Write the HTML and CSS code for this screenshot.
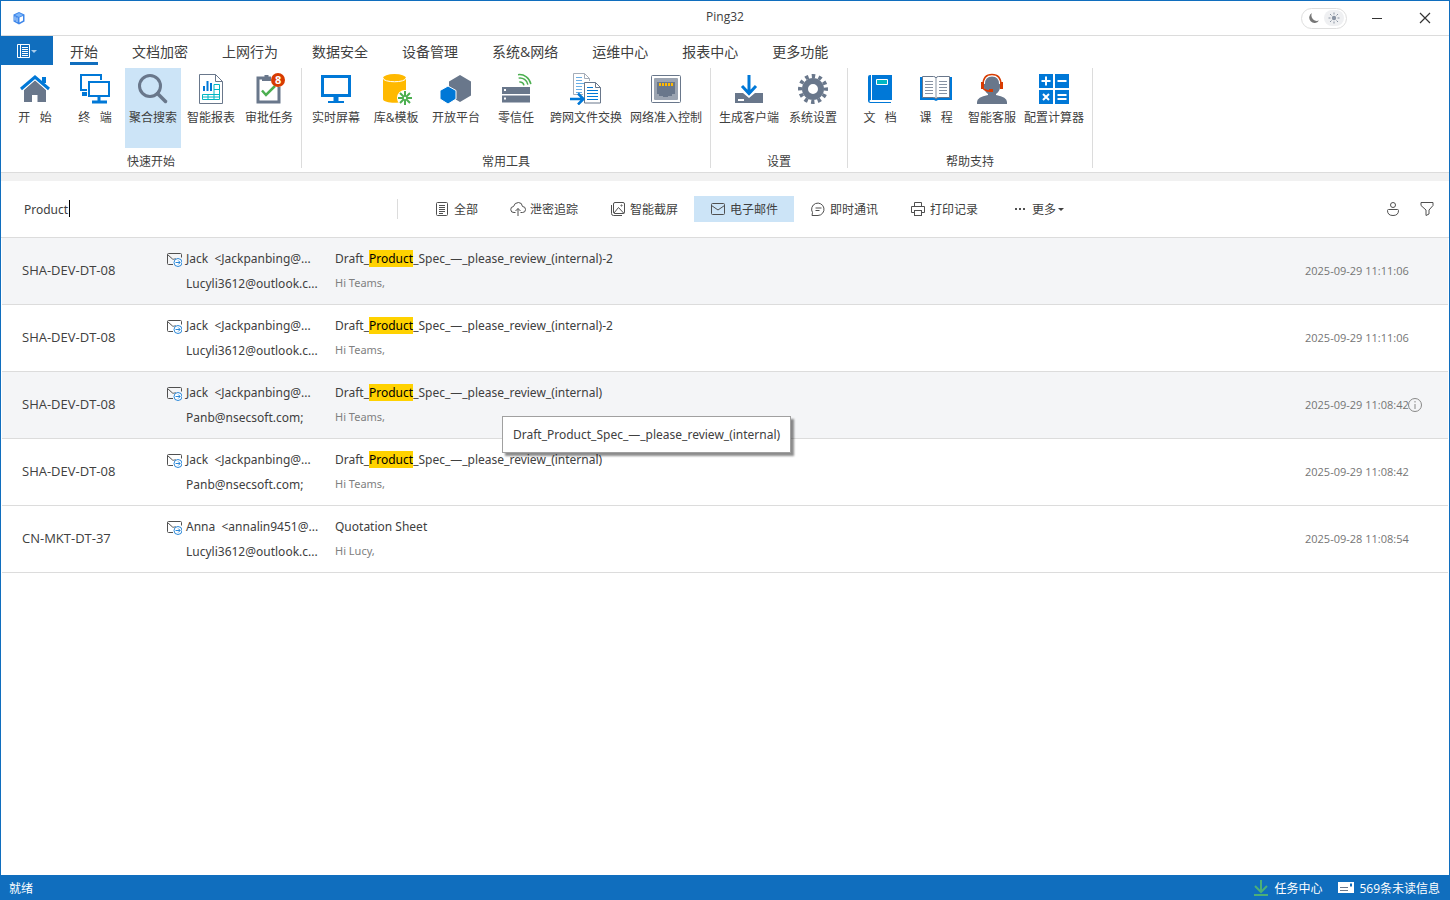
FILE: index.html
```html
<!DOCTYPE html>
<html lang="zh-CN">
<head>
    <meta charset="UTF-8">
    <meta name="viewport" content="width=device-width, initial-scale=1.0">
    <title>Ping32</title>
    <link rel="stylesheet" href="styles.css">
</head>
<body>
    <!-- 共用图标 -->
    <svg class="sprite" aria-hidden="true">
        <symbol id="mail-out" viewBox="0 0 16 16">
            <path d="M7 13.500H2.500A1 1 0 0 1 1.500 12.500V3.500A1 1 0 0 1 2.500 2.500H14.500A1 1 0 0 1 15.500 3.500V6.500M1.500 3.500L6.500 8Q7.500 8.500 8.500 8L9.500 7.500" fill="none" stroke="#505050"/>
            <circle cx="12" cy="11.500" r="4" fill="#fff" stroke="#2b88d8"/>
            <path d="M9.500 11.500h4.500M12.200 9.500l2 2-2 2" fill="none" stroke="#2b88d8"/>
        </symbol>
    </svg>

    <div class="window">
        <header class="titlebar">
            <svg class="logo" viewBox="0 0 14 14">
                <path d="M7 1l5.500 2.500v7L7 13.500 1.500 10.500v-7z" fill="#3f87ea"/>
                <path d="M3 4l4-2 4 2-4 2z" fill="#7db6fa"/>
                <path d="M7.500 6.500l3.500-1.500v4.500l-3.500 2z" fill="#fff"/>
                <path d="M3 5.500v4M5 6.500v4.500" stroke="#c5dffc"/>
            </svg>
            <h1>Ping32</h1>
            <div class="window-controls">
                <button class="theme-switch" aria-label="切换主题">
                    <svg viewBox="0 0 16 16"><path d="M6 3a5.500 5.500 0 0 0 7 7.500A5.300 5.300 0 1 1 6 3z" fill="#777"/></svg>
                    <span class="theme-knob">
                        <svg viewBox="0 0 16 16"><circle cx="8" cy="8" r="2.200" fill="#8a94a3"/><path d="M8 2.500v2M8 11.500v2M2.500 8h2M11.500 8h2M4 4l1.500 1.500M10.500 10.500L12 12M4 12l1.500-1.500M10.500 5.500L12 4" stroke="#8a94a3"/></svg>
                    </span>
                </button>
                <button class="control" aria-label="最小化"><svg viewBox="0 0 12 12"><path d="M1 6.500h10" stroke="#333"/></svg></button>
                <button class="control" aria-label="关闭"><svg viewBox="0 0 12 12"><path d="M1 1l10 10M11 1L1 11" stroke="#333" stroke-width="1.200"/></svg></button>
            </div>
        </header>

        <nav class="tabs">
            <button class="file-menu" aria-label="菜单">
                <svg viewBox="0 0 20 14">
                    <path d="M.5.5h12v13H.5zM3.500.500v13M5 3.500h6M5 5.500h6M5 7.500h6M5 9.500h6M5 11.500h6" fill="none" stroke="#fff"/>
                    <path d="M14 6h6l-3 3z" fill="#a9cdec"/>
                </svg>
            </button>
            <a href="#" class="tab active"><span>开始</span></a>
            <a href="#" class="tab"><span>文档加密</span></a>
            <a href="#" class="tab"><span>上网行为</span></a>
            <a href="#" class="tab"><span>数据安全</span></a>
            <a href="#" class="tab"><span>设备管理</span></a>
            <a href="#" class="tab"><span>系统&amp;网络</span></a>
            <a href="#" class="tab"><span>运维中心</span></a>
            <a href="#" class="tab"><span>报表中心</span></a>
            <a href="#" class="tab"><span>更多功能</span></a>
        </nav>

        <div class="ribbon">
            <section class="group quick">
                <div class="tools">
                    <button class="tool short">
                        <svg viewBox="0 0 32 32"><path d="M23 4h4v8h-4z" fill="#0078d7"/><path d="M16 7L5 17v12h8v-7h5.500v7H27V17z" fill="#69778b"/><path d="M2 16L16 4l14 12" fill="none" stroke="#fff" stroke-width="5"/><path d="M2 16L16 4l14 12" fill="none" stroke="#0078d7" stroke-width="3"/><path d="M23 4h4v6h-4z" fill="#0078d7"/></svg>
                        <span>开&nbsp;&nbsp; 始</span>
                    </button>
                    <button class="tool short">
                        <svg viewBox="0 0 32 32" fill="none" stroke="#0078d7" stroke-width="2"><path d="M22 7V2H2v15h6M8 20H4v2h4"/><rect x="10" y="9" width="20" height="14"/><path d="M20 23v6M13 29h15" stroke-width="3"/></svg>
                        <span>终&nbsp;&nbsp; 端</span>
                    </button>
                    <button class="tool selected">
                        <svg viewBox="0 0 32 32" fill="none" stroke="#69778b" stroke-width="3"><circle cx="13" cy="13" r="10.500"/><path d="M20.500 20.500l8 8" stroke-width="3.500" stroke-linecap="round"/></svg>
                        <span>聚合搜索</span>
                    </button>
                    <button class="tool">
                        <svg viewBox="0 0 32 32" fill="none"><path d="M4.500 1.500h16l7 7v22h-23zM20.500 1.500v7h7" stroke="#69778b"/><path d="M9 13v5M12.500 8v10M16 10v8" stroke="#0078d7" stroke-width="2"/><path d="M19 11.500h5.500v15h-17v-5h17M19 16.500h5.500M7.500 24h17M13 21.500v5M19 11.500v15" stroke="#00b7c3"/></svg>
                        <span>智能报表</span>
                    </button>
                    <button class="tool">
                        <svg viewBox="0 0 32 32" fill="none"><path d="M9 5H5v24h21V14" stroke="#69778b" stroke-width="3"/><path d="M9 3.500h2.500V2h4v1.500H18V8H9z" fill="#69778b"/><path d="M9 17.500l4 4.500 9-9" stroke="#4caf50" stroke-width="2.500"/></svg>
                        <i class="badge">8</i>
                        <span>审批任务</span>
                    </button>
                </div>
                <h2>快速开始</h2>
            </section>
            <section class="group common">
                <div class="tools">
                    <button class="tool">
                        <svg viewBox="0 0 32 32" fill="none" stroke="#0078d7"><rect x="2.500" y="3.500" width="27" height="19" stroke-width="3"/><path d="M16 23v6" stroke-width="5"/><path d="M8 29h16" stroke-width="2"/></svg>
                        <span>实时屏幕</span>
                    </button>
                    <button class="tool">
                        <svg viewBox="0 0 32 32"><path d="M3 5v21c0 5 23 5 23 0V5z" fill="#ffb900"/><ellipse cx="14.500" cy="5" rx="11.500" ry="4" fill="#ffb900"/><path d="M3 5c0 5 23 5 23 0" fill="none" stroke="#fff"/><circle cx="25" cy="25" r="8" fill="#fff"/><path d="M25 18v14M18 25h14M20 20l10 10M20 30l10-10" stroke="#4caf50" stroke-width="2"/><circle cx="25" cy="25" r="1.200" fill="#fff"/></svg>
                        <span>库&amp;模板</span>
                    </button>
                    <button class="tool">
                        <svg viewBox="0 0 32 32"><path d="M20 2l11 6.500v14L20 29 9 22.500v-14z" fill="#69778b"/><path d="M8 13l8 4.500v8.500l-8 5-8-5v-8.500z" fill="#0078d7" stroke="#fff"/></svg>
                        <span>开放平台</span>
                    </button>
                    <button class="tool">
                        <svg viewBox="0 0 32 32"><path d="M2 14h28v7H2zM2 22.500h28v7H2z" fill="#69778b"/><path d="M4 16h2v2H4zM4 24.500h2v2H4z" fill="#fff"/><path d="M20 9a4 4 0 0 1 4 4M20 5a8 8 0 0 1 8 8M20 1.500A11.500 11.500 0 0 1 31 13" transform="rotate(-10 20 13)" fill="none" stroke="#4caf50" stroke-width="1.500"/></svg>
                        <span>零信任</span>
                    </button>
                    <button class="tool">
                        <svg viewBox="0 0 32 32" fill="none"><path d="M13 21.500H3.500v-21h11l5 5V8M14.500.500v5h5" stroke="#a5adb8"/><path d="M6 4.500h6M6 7.500h6M6 10.500h8M6 13.500h6M6 16.500h6M6 19.500h6" stroke="#69aee6"/><path d="M14.500 9.500h11l5 5v15.500h-16zM25.500 9.500v5h5" fill="#fff" stroke="#69778b"/><path d="M17 14.500h6M17 17.500h11M17 20.500h11M17 23.500h11M17 26.500h11" stroke="#0078d7"/><path d="M0 26h13M8 20.500l5.500 5.500L8 31.500" stroke="#0078d7" stroke-width="2.500"/></svg>
                        <span>跨网文件交换</span>
                    </button>
                    <button class="tool">
                        <svg viewBox="0 0 32 32"><rect x="1.500" y="2.500" width="29" height="27" rx="1" fill="#fff" stroke="#69778b"/><rect x="4" y="5" width="24" height="22" rx="1" fill="#9ba4b1"/><path d="M7 9h18v12h-3v2h-4v1h-5v-1H9v-2H7z" fill="#69778b"/><path d="M9 11.500h14" stroke="#ffb900" stroke-width="3" stroke-dasharray="2 1"/></svg>
                        <span>网络准入控制</span>
                    </button>
                </div>
                <h2>常用工具</h2>
            </section>
            <section class="group setup">
                <div class="tools">
                    <button class="tool">
                        <svg viewBox="0 0 32 32"><path d="M2 20h8l6 5 6-5h8v10H2z" fill="#69778b"/><path d="M5 26h6v2H5z" fill="#fff"/><path d="M16 2v18M9 13l7 7.500 7-7.500" fill="none" stroke="#0078d7" stroke-width="3"/></svg>
                        <span>生成客户端</span>
                    </button>
                    <button class="tool">
                        <svg viewBox="0 0 32 32" fill="none" stroke="#69778b"><circle cx="16" cy="16" r="8" stroke-width="6"/><circle cx="16" cy="16" r="13" stroke-width="4" stroke-dasharray="3.403 3.403" transform="rotate(-7 16 16)"/></svg>
                        <span>系统设置</span>
                    </button>
                </div>
                <h2>设置</h2>
            </section>
            <section class="group">
                <div class="tools">
                    <button class="tool">
                        <svg viewBox="0 0 32 32"><path d="M6 2h22v25H6.500a1 1 0 0 0 0 2H27v1H6q-2-.5-2-2V4q0-2 2-2z" fill="#0078d7"/><path d="M7.500 2v25" stroke="#fff"/><path d="M12.500 6.500h11v5h-11z" fill="#00b7c3" stroke="#fff"/></svg>
                        <span>文&nbsp;&nbsp; 档</span>
                    </button>
                    <button class="tool">
                        <svg viewBox="0 0 32 32"><path d="M0 4h32v23H18l-2 1-2-1H0z" fill="#0078d7"/><path d="M2.500 3.500h11q2 0 2.500 1.500.5-1.500 2.500-1.500h11v21h-11q-2 0-2.500 1.500-.5-1.500-2.500-1.500h-11z" fill="#fff" stroke="#69778b"/><path d="M16 5v20M5 8.500h8M5 11.500h8M5 14.500h8M5 17.500h8M5 20.500h8M19 8.500h8M19 11.500h8M19 14.500h8M19 17.500h8M19 20.500h8" stroke="#8792a2"/></svg>
                        <span>课&nbsp;&nbsp; 程</span>
                    </button>
                    <button class="tool">
                        <svg viewBox="0 0 32 32"><path d="M8 9q0-7 8-7t8 7v5q0 4-4 7v1q11 2 11 7v2H1v-2q0-5 11-7v-1q-4-3-4-7z" fill="#69778b"/><path d="M7 11Q7 1.500 16 1.500T25 11" fill="none" stroke="#fff" stroke-width="4"/><path d="M7 12Q7 1.500 16 1.500T25 12M7 15q2 3 7 3" fill="none" stroke="#d83b01" stroke-width="1.500"/><path d="M5 9h3v7H5zM24 9h3v7h-3zM13 16h4v3h-4z" fill="#d83b01"/></svg>
                        <span>智能客服</span>
                    </button>
                    <button class="tool">
                        <svg viewBox="0 0 32 32"><path d="M1 1h14v14H1zM17 1h14v14H17zM1 17h14v14H1zM17 17h14v14H17z" fill="#0078d7"/><path d="M3.500 8h9M8 3.500v9M19.500 8h9M5 21l6 6M11 21l-6 6M19.500 22h9M19.500 26h9" stroke="#fff" stroke-width="2"/></svg>
                        <span>配置计算器</span>
                    </button>
                </div>
                <h2>帮助支持</h2>
            </section>
        </div>

        <div class="searchbar">
            <div class="search-field">
                <input type="text" value="Product" aria-label="搜索">
                <span class="caret"></span>
            </div>
            <div class="filters">
                <button class="filter"><svg viewBox="0 0 16 16"><rect x="2.500" y="1.500" width="11" height="13" rx="1"/><path d="M5 4.500h6M5 6.500h6M5 8.500h6M5 10.500h6M5 12.500h4"/></svg>全部</button>
                <button class="filter"><svg viewBox="0 0 16 16"><path d="M5.500 11.500H4a3 3 0 0 1-.5-6q1-4 5-4 3.500 0 4 4a3 3 0 0 1 0 6h-2M8 15V7.500M5.500 10L8 7.500l2.500 2.500"/></svg>泄密追踪</button>
                <button class="filter"><svg viewBox="0 0 16 16"><rect x="3.500" y="1.500" width="11" height="11" rx="1.500"/><path d="M1.500 4v8.500q0 2 2 2H12M4 12l4.500-5.500 5.500 6"/><circle cx="11.500" cy="4.500" r=".6"/></svg>智能截屏</button>
                <button class="filter current"><svg viewBox="0 0 16 16"><rect x="1.500" y="2.500" width="13" height="11" rx="1"/><path d="M1.500 4.500L8 9l6.500-4.500"/></svg>电子邮件</button>
                <button class="filter"><svg viewBox="0 0 16 16"><path d="M2 14.500h6A6.200 6.200 0 1 0 2.500 11.500zM5.500 7h6M5.500 9.500h4"/></svg>即时通讯</button>
                <button class="filter"><svg viewBox="0 0 16 16"><path d="M4.500 5.500v-4h7v4M4 11.500H1.500v-6h13v6H12"/><rect x="4.500" y="9.500" width="7" height="5"/></svg>打印记录</button>
                <button class="filter more"><svg viewBox="0 0 16 16"><path d="M3 8h2M7 8h2M11 8h2" stroke-width="2"/></svg>更多<i class="arrow"></i></button>
            </div>
            <div class="search-actions">
                <button aria-label="用户"><svg viewBox="0 0 16 16"><circle cx="8" cy="4" r="2.500"/><path d="M3.500 8.500h9q1 0 1 1 0 5-5.500 5t-5.500-5q0-1 1-1z"/></svg></button>
                <button aria-label="筛选"><svg viewBox="0 0 16 16"><path d="M2 1.500h12v3L10 9v4l-3 1.500V9L2 4.500z"/></svg></button>
            </div>
        </div>

        <main>
            <table class="results">
                <colgroup>
                    <col class="col-device">
                    <col class="col-people">
                    <col>
                    <col class="col-time">
                </colgroup>
                <tbody>
                    <tr class="shaded">
                        <td class="device">SHA-DEV-DT-08</td>
                        <td class="people"><svg><use href="#mail-out"/></svg><p>Jack &nbsp;&lt;Jackpanbing@...</p><p>Lucyli3612@outlook.c...</p></td>
                        <td class="subject"><p>Draft_<mark>Product</mark>_Spec_—_please_review_(internal)-2</p><p class="preview">Hi Teams,</p></td>
                        <td class="time">2025-09-29 11:11:06</td>
                    </tr>
                    <tr>
                        <td class="device">SHA-DEV-DT-08</td>
                        <td class="people"><svg><use href="#mail-out"/></svg><p>Jack &nbsp;&lt;Jackpanbing@...</p><p>Lucyli3612@outlook.c...</p></td>
                        <td class="subject"><p>Draft_<mark>Product</mark>_Spec_—_please_review_(internal)-2</p><p class="preview">Hi Teams,</p></td>
                        <td class="time">2025-09-29 11:11:06</td>
                    </tr>
                    <tr class="shaded">
                        <td class="device">SHA-DEV-DT-08</td>
                        <td class="people"><svg><use href="#mail-out"/></svg><p>Jack &nbsp;&lt;Jackpanbing@...</p><p>Panb@nsecsoft.com;</p></td>
                        <td class="subject">
                            <p>Draft_<mark>Product</mark>_Spec_—_please_review_(internal)</p><p class="preview">Hi Teams,</p>
                            <div class="tooltip" role="tooltip">Draft_Product_Spec_—_please_review_(internal)</div>
                        </td>
                        <td class="time">2025-09-29 11:08:42<button class="info" aria-label="详情"><svg viewBox="0 0 16 16"><circle cx="8" cy="8" r="6.500"/><path d="M8 7v5M8 4v1.500"/></svg></button></td>
                    </tr>
                    <tr>
                        <td class="device">SHA-DEV-DT-08</td>
                        <td class="people"><svg><use href="#mail-out"/></svg><p>Jack &nbsp;&lt;Jackpanbing@...</p><p>Panb@nsecsoft.com;</p></td>
                        <td class="subject"><p>Draft_<mark>Product</mark>_Spec_—_please_review_(internal)</p><p class="preview">Hi Teams,</p></td>
                        <td class="time">2025-09-29 11:08:42</td>
                    </tr>
                    <tr>
                        <td class="device">CN-MKT-DT-37</td>
                        <td class="people"><svg><use href="#mail-out"/></svg><p>Anna &nbsp;&lt;annalin9451@...</p><p>Lucyli3612@outlook.c...</p></td>
                        <td class="subject"><p>Quotation Sheet</p><p class="preview">Hi Lucy,</p></td>
                        <td class="time">2025-09-28 11:08:54</td>
                    </tr>
                </tbody>
            </table>
        </main>

        <footer class="statusbar">
            <span>就绪</span>
            <div class="status-links">
                <a href="#"><svg viewBox="0 0 16 16"><path d="M8 0v12M2 6l6 6 6-6M1 15h14" fill="none" stroke="#4caf78" stroke-width="2"/></svg>任务中心</a>
                <a href="#"><svg viewBox="0 0 16 16"><path d="M0 2h16v11H0z" fill="#fff"/><path d="M12 3.500h2v3h-2z" fill="#106ebe"/><path d="M2 7.500h8M2 10.500h8" stroke="#69778b"/></svg>569条未读信息</a>
            </div>
        </footer>
    </div>
</body>
</html>
```
FILE: styles.css
```css
* {
    margin: 0;
    padding: 0;
    box-sizing: border-box;
}

body {
    font-family: "Open Sans", "Noto Sans CJK SC", sans-serif;
    font-size: 12px;
    color: #404040;
    background: #fff;
}

button,
input {
    font: inherit;
    color: inherit;
    border: none;
    background: none;
}

a {
    color: inherit;
    text-decoration: none;
}

.sprite {
    display: none;
}

.window {
    display: flex;
    flex-direction: column;
    min-height: 100vh;
    border: 1px solid #106ebe;
    border-bottom: none;
}

/* 标题栏 */
.titlebar {
    display: grid;
    grid-template-columns: 1fr auto 1fr;
    align-items: center;
    height: 35px;
    border-bottom: 1px solid #dcdcdc;
}

.logo {
    width: 14px;
    height: 14px;
    margin-left: 11px;
}

h1 {
    font-size: 12px;
    font-weight: normal;
    line-height: 16px;
    padding-bottom: 2px;
}

.window-controls {
    display: flex;
    justify-content: flex-end;
    align-items: center;
}

.theme-switch {
    display: flex;
    align-items: center;
    gap: 2px;
    width: 46px;
    height: 21px;
    margin-right: 6px;
    padding: 0 2px 0 4px;
    border: 1px solid #dedede;
    border-radius: 11px;
}

.theme-switch svg {
    display: block;
    width: 16px;
    height: 16px;
}

.theme-knob {
    display: flex;
    justify-content: center;
    width: 20px;
    border-radius: 8px;
    background: #eff0f2;
}

.control {
    width: 48px;
    height: 34px;
}

.control svg {
    display: block;
    width: 12px;
    height: 12px;
    margin: 0 auto;
}

/* 菜单标签 */
.tabs {
    display: flex;
    height: 32px;
}

.file-menu {
    width: 52px;
    height: 29px;
    background: #106ebe;
}

.file-menu svg {
    display: block;
    width: 20px;
    height: 14px;
    margin: 0 auto;
}

.tab {
    height: 29px;
    padding: 0 17px;
    font-size: 14px;
    line-height: 32px;
}

.tab span {
    display: block;
    height: 29px;
}

.tab.active span {
    border-bottom: 3px solid #106ebe;
}

/* 功能区 */
.ribbon {
    display: flex;
    height: 105px;
    border-bottom: 1px solid #dcdcdc;
}

.group {
    display: flex;
    flex-direction: column;
    height: 100px;
    padding: 0 4px;
    border-right: 1px solid #dcdcdc;
}

.tools {
    display: flex;
}

.quick .tools {
    gap: 2px;
}

.tool {
    position: relative;
    min-width: 56px;
    height: 80px;
    padding: 5px 4px 0;
    display: flex;
    flex-direction: column;
    align-items: center;
    line-height: 25px;
    white-space: nowrap;
}

.tool.short {
    min-width: 58px;
    padding-left: 6px;
}

.common .tool,
.setup .tool {
    min-width: 60px;
}

.tool svg {
    flex: none;
    width: 32px;
    height: 32px;
}

.tool.selected,
.filter.current {
    background: #cce4f7;
}

.badge {
    position: absolute;
    top: 5px;
    right: 12px;
    width: 14px;
    height: 14px;
    border-radius: 7px;
    background: #d83b01;
    color: #fff;
    font-size: 11px;
    font-style: normal;
    font-weight: bold;
    line-height: 14px;
    text-align: center;
}

.group h2 {
    font-size: 12px;
    font-weight: normal;
    line-height: 28px;
    text-align: center;
}

/* 搜索栏 */
.searchbar {
    display: flex;
    align-items: center;
    height: 65px;
    border-top: 8px solid #f1f1f1;
    border-bottom: 1px solid #dcdcdc;
}

.search-field {
    position: relative;
    width: 397px;
    height: 20px;
    padding-left: 23px;
    border-right: 1px solid #dcdcdc;
}

.search-field input {
    display: block;
    width: 100%;
    height: 20px;
    font-family: "Noto Sans", "Noto Sans CJK SC", sans-serif;
    font-size: 12px;
    outline: none;
}

.caret {
    position: absolute;
    top: 1px;
    left: 68px;
    width: 1px;
    height: 17px;
    background: #000;
}

.filters {
    display: flex;
    margin-left: 20px;
}

.filter {
    display: flex;
    align-items: center;
    gap: 4px;
    height: 26px;
    padding: 0 16px;
    white-space: nowrap;
}

.filter svg,
.search-actions svg,
.info svg {
    display: block;
    width: 16px;
    height: 16px;
    fill: none;
    stroke: #505050;
}

.filter.more {
    padding-left: 18px;
}

.arrow {
    border: 3px solid transparent;
    border-top-color: #404040;
    border-bottom: none;
    margin-left: -2px;
}

.search-actions {
    display: flex;
    gap: 18px;
    margin-left: auto;
    padding-right: 14px;
}

/* 搜索结果 */
main {
    flex: 1;
    padding: 0 1px;
}

.results {
    width: 100%;
    table-layout: fixed;
    border-collapse: separate;
    border-spacing: 0;
    font-family: "Noto Sans", "Noto Sans CJK SC", sans-serif;
}

.col-device {
    width: 164px;
}

.col-people {
    width: 169px;
}

.col-time {
    width: 143px;
}

.results td {
    position: relative;
    height: 67px;
    border-bottom: 1px solid #dcdcdc;
    white-space: nowrap;
}

.results p {
    line-height: 25px;
}

.shaded {
    background: #f4f5f7;
}

.results .device {
    padding: 0 0 2px 20px;
    font-family: "Open Sans", sans-serif;
    font-size: 13px;
}

.results .people {
    padding-left: 20px;
}

.people svg {
    position: absolute;
    top: 13px;
    left: 0;
    width: 16px;
    height: 16px;
}

mark {
    background: #ffd200;
    color: #000;
}

.results .preview {
    font-size: 11px;
    line-height: 24px;
    padding-bottom: 1px;
    color: #808080;
}

.results .time {
    padding-bottom: 2px;
    font-family: "Open Sans", sans-serif;
    font-size: 11px;
    color: #757575;
}

.info {
    position: absolute;
    top: 25px;
    right: 25px;
}

.info svg {
    stroke: #888;
}

.tooltip {
    position: absolute;
    z-index: 1;
    top: 44px;
    left: 167px;
    padding: 0 10px;
    border: 1px solid #a0a0a0;
    background: #fff;
    line-height: 35px;
    box-shadow: 3px 3px 2px rgba(0, 0, 0, 0.45);
}

/* 状态栏 */
.statusbar {
    display: flex;
    justify-content: space-between;
    align-items: center;
    height: 25px;
    padding: 0 9px 0 8px;
    background: #106ebe;
    color: #fff;
}

.status-links {
    display: flex;
    gap: 16px;
}

.status-links a {
    display: flex;
    align-items: center;
    gap: 5px;
}

.status-links svg {
    width: 16px;
    height: 16px;
}
```
